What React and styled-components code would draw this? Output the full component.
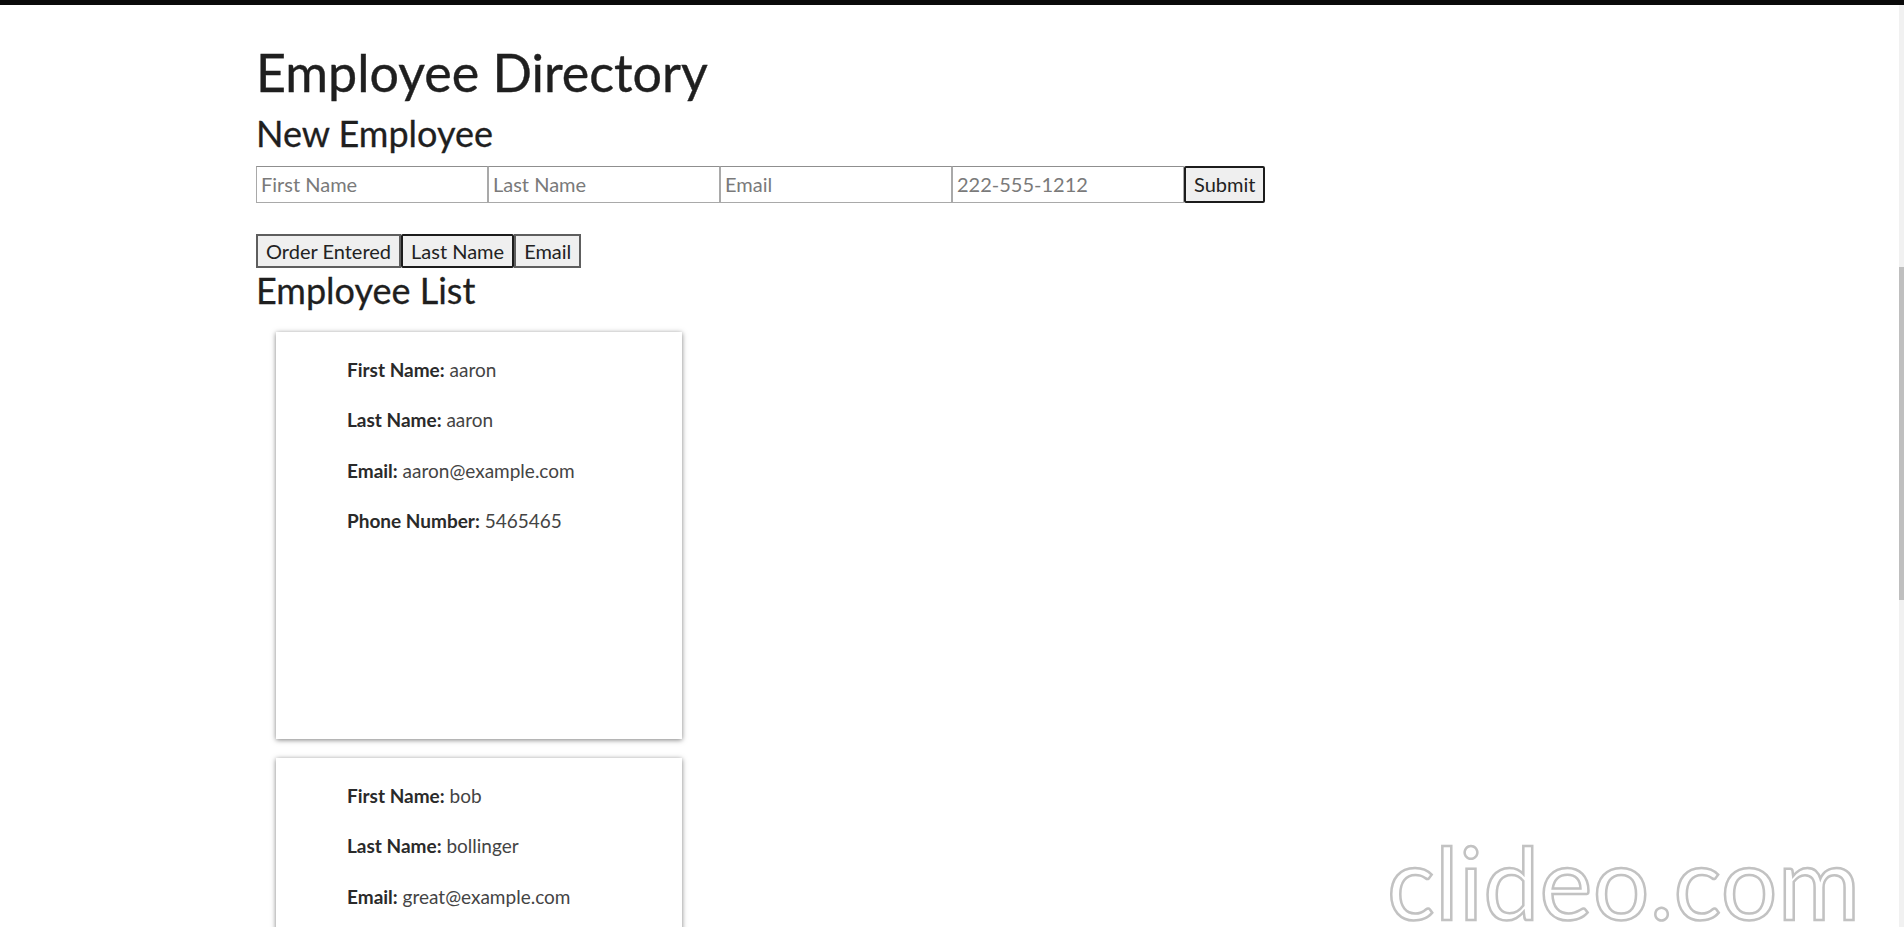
import React, { useState } from "react";
import styled, { createGlobalStyle } from "styled-components";

const GlobalStyle = createGlobalStyle`
  html, body {
    margin: 0;
    padding: 0;
    background: #ffffff;
    overflow: hidden;
    font-family: Lato, "Open Sans", sans-serif;
    color: #222;
  }
`;

const TopBar = styled.div`
  height: 5px;
  background: #0a0a0a;
`;

const Page = styled.main`
  padding-left: 256px;
  height: calc(100vh - 5px);
  overflow: hidden;
`;

const Title = styled.h1`
  margin: 36px 0 0;
  font-size: 52px;
  font-weight: 400;
  line-height: 1.2;
  color: #1f1f1f;
  -webkit-text-stroke: 0.4px #1f1f1f;
`;

const SubTitle = styled.h2`
  margin: ${(p) => p.$top}px 0 0;
  font-size: 36px;
  font-weight: 400;
  line-height: 1.2;
  color: #1f1f1f;
  -webkit-text-stroke: 0.3px #1f1f1f;
`;

const Form = styled.form`
  display: flex;
  margin-top: 10px;
  height: 37px;
`;

const Input = styled.input`
  box-sizing: border-box;
  width: 232px;
  height: 37px;
  margin: 0;
  padding: 0 4px;
  border: 1px solid #a9a9a9;
  border-top-color: #8f8f8f;
  font-family: Lato, "Open Sans", sans-serif;
  font-size: 20px;
  color: #333;
  background: #fff;
  outline: none;

  &::placeholder {
    color: #7a7a7a;
  }
`;

const Button = styled.button`
  box-sizing: border-box;
  margin: 0;
  padding: 0 8px;
  height: ${(p) => p.$h}px;
  background: #efefef;
  border: 2px solid ${(p) => (p.$active ? "#1c1c1c" : "#5e5e5e")};
  border-radius: ${(p) => (p.$active ? 2 : 0)}px;
  font-family: Lato, "Open Sans", sans-serif;
  font-size: 20px;
  color: #222;
  cursor: pointer;
`;

const SortBar = styled.div`
  display: flex;
  margin-top: 31px;
`;

const CardList = styled.div`
  display: flex;
  flex-direction: column;
  gap: 19px;
  margin: 20px 0 0 20px;
`;

const Card = styled.div`
  box-sizing: border-box;
  width: 406px;
  height: 407px;
  padding: 26px 0 0 71px;
  background: #fff;
  box-shadow: 0 1px 5px rgba(0, 0, 0, 0.5);
  display: flex;
  flex-direction: column;
  gap: 26.5px;
`;

const Field = styled.div`
  font-size: 19px;
  line-height: 24px;
  color: #444;

  b {
    color: #2a2a2a;
    font-weight: 700;
  }
`;

const Watermark = styled.div`
  position: fixed;
  left: 1387px;
  top: 831px;
  font-family: Lato, sans-serif;
  font-size: 100px;
  line-height: 1;
  letter-spacing: 0.3px;
  color: #fff;
  -webkit-text-stroke: 2.5px #c2c2c2;
  pointer-events: none;
  white-space: nowrap;
`;

const ScrollTrack = styled.div`
  position: fixed;
  top: 5px;
  right: 0;
  width: 5px;
  bottom: 0;
  background: #f1f1f1;
`;

const ScrollThumb = styled.div`
  margin-top: 262px;
  height: 333px;
  background: #bfbfbf;
`;

const employees = [
  { first: "aaron", last: "aaron", email: "aaron@example.com", phone: "5465465" },
  { first: "bob", last: "bollinger", email: "great@example.com", phone: "5551212" },
];

export default function App() {
  const [sort, setSort] = useState("last");

  return (
    <>
      <GlobalStyle />
      <TopBar />
      <Page>
        <Title>Employee Directory</Title>
        <SubTitle $top={9}>New Employee</SubTitle>
        <Form onSubmit={(e) => e.preventDefault()}>
          <Input placeholder="First Name" />
          <Input placeholder="Last Name" />
          <Input placeholder="Email" />
          <Input placeholder="222-555-1212" />
          <Button type="submit" $h={37} $active>
            Submit
          </Button>
        </Form>
        <SortBar>
          <Button $h={34} onClick={() => setSort("order")}>
            Order Entered
          </Button>
          <Button $h={34} $active={sort === "last"} onClick={() => setSort("last")}>
            Last Name
          </Button>
          <Button $h={34} onClick={() => setSort("email")}>
            Email
          </Button>
        </SortBar>
        <SubTitle $top={1}>Employee List</SubTitle>
        <CardList>
          {employees.map((emp) => (
            <Card key={emp.email}>
              <Field>
                <b>First Name:</b> {emp.first}
              </Field>
              <Field>
                <b>Last Name:</b> {emp.last}
              </Field>
              <Field>
                <b>Email:</b> {emp.email}
              </Field>
              <Field>
                <b>Phone Number:</b> {emp.phone}
              </Field>
            </Card>
          ))}
        </CardList>
      </Page>
      <Watermark>clideo.com</Watermark>
      <ScrollTrack>
        <ScrollThumb />
      </ScrollTrack>
    </>
  );
}
